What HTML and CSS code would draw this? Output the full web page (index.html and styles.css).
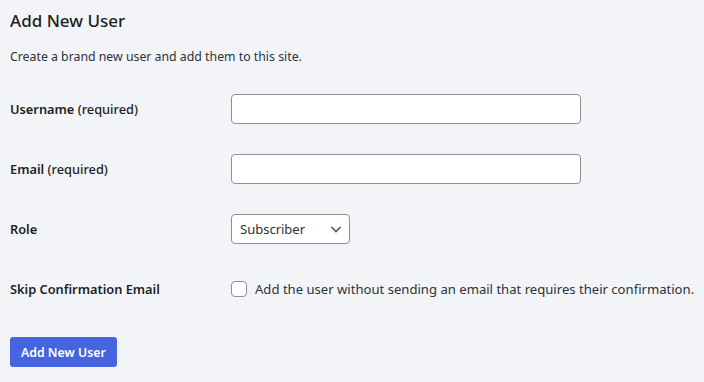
FILE: index.html
```html
<!DOCTYPE html>
<html lang="en">
<head>
    <meta charset="UTF-8">
    <title>Add New User</title>
    <link rel="stylesheet" href="styles.css">
</head>
<body>
    <div class="wrap">
        <h1>Add New User</h1>
        <p class="intro">Create a brand new user and add them to this site.</p>

        <form class="user-form">
            <div class="row">
                <label for="user-login">Username <span class="req">(required)</span></label>
                <input type="text" id="user-login" class="field">
            </div>
            <div class="row">
                <label for="user-email">Email <span class="req">(required)</span></label>
                <input type="email" id="user-email" class="field">
            </div>
            <div class="row">
                <label for="user-role">Role</label>
                <div class="select">
                    <span>Subscriber</span>
                    <svg width="14" height="14" viewBox="0 0 14 14"><path d="M2.5 5l4.5 4.5 4.5-4.5" fill="none" stroke="#50575e" stroke-width="1.6"/></svg>
                </div>
            </div>
            <div class="row">
                <label for="noconfirm">Skip Confirmation Email</label>
                <div class="check">
                    <span class="box" id="noconfirm"></span>
                    <span>Add the user without sending an email that requires their confirmation.</span>
                </div>
            </div>
            <button type="submit" class="btn">Add New User</button>
        </form>
    </div>
</body>
</html>
```

FILE: styles.css
```css
body {
    margin: 0;
    background: #f3f4f8;
    color: #1e1e1e;
    font-family: "Noto Sans", "Open Sans", sans-serif;
    font-size: 13px;
}

.wrap {
    padding: 9px 10px;
}

h1 {
    font-size: 17px;
    font-weight: 500;
    margin: 0;
    line-height: 24px;
}

.intro {
    margin: 14px 0 0;
    font-size: 12.3px;
    line-height: 20px;
    color: #2c3338;
}

.user-form {
    margin-top: 27px;
}

.row {
    display: grid;
    grid-template-columns: 221px 1fr;
    align-items: center;
    height: 30px;
    margin-bottom: 30px;
}

.row:last-of-type {
    margin-bottom: 33px;
}

.row label {
    font-weight: 600;
    font-size: 12.8px;
}

.req {
    font-weight: 500;
}

.field {
    width: 350px;
    height: 30px;
    box-sizing: border-box;
    border: 1px solid #8c8f94;
    border-radius: 4px;
    background: #fff;
}

.select {
    width: 119px;
    height: 30px;
    box-sizing: border-box;
    border: 1px solid #8c8f94;
    border-radius: 4px;
    background: #fff;
    display: flex;
    align-items: center;
    justify-content: space-between;
    padding: 0 6px 0 8px;
    color: #2c3338;
    font-size: 13px;
}

.check {
    display: flex;
    align-items: center;
    gap: 8px;
    font-size: 13.1px;
    color: #2c3338;
    white-space: nowrap;
}

.box {
    width: 16px;
    height: 16px;
    box-sizing: border-box;
    border: 1px solid #8c8f94;
    border-radius: 4px;
    background: #fff;
    flex: none;
}

.btn {
    display: block;
    height: 30px;
    padding: 0 11px;
    background: #4664e0;
    color: #fff;
    border: none;
    border-radius: 3px;
    font-family: inherit;
    font-size: 12.3px;
    font-weight: 600;
}
```
